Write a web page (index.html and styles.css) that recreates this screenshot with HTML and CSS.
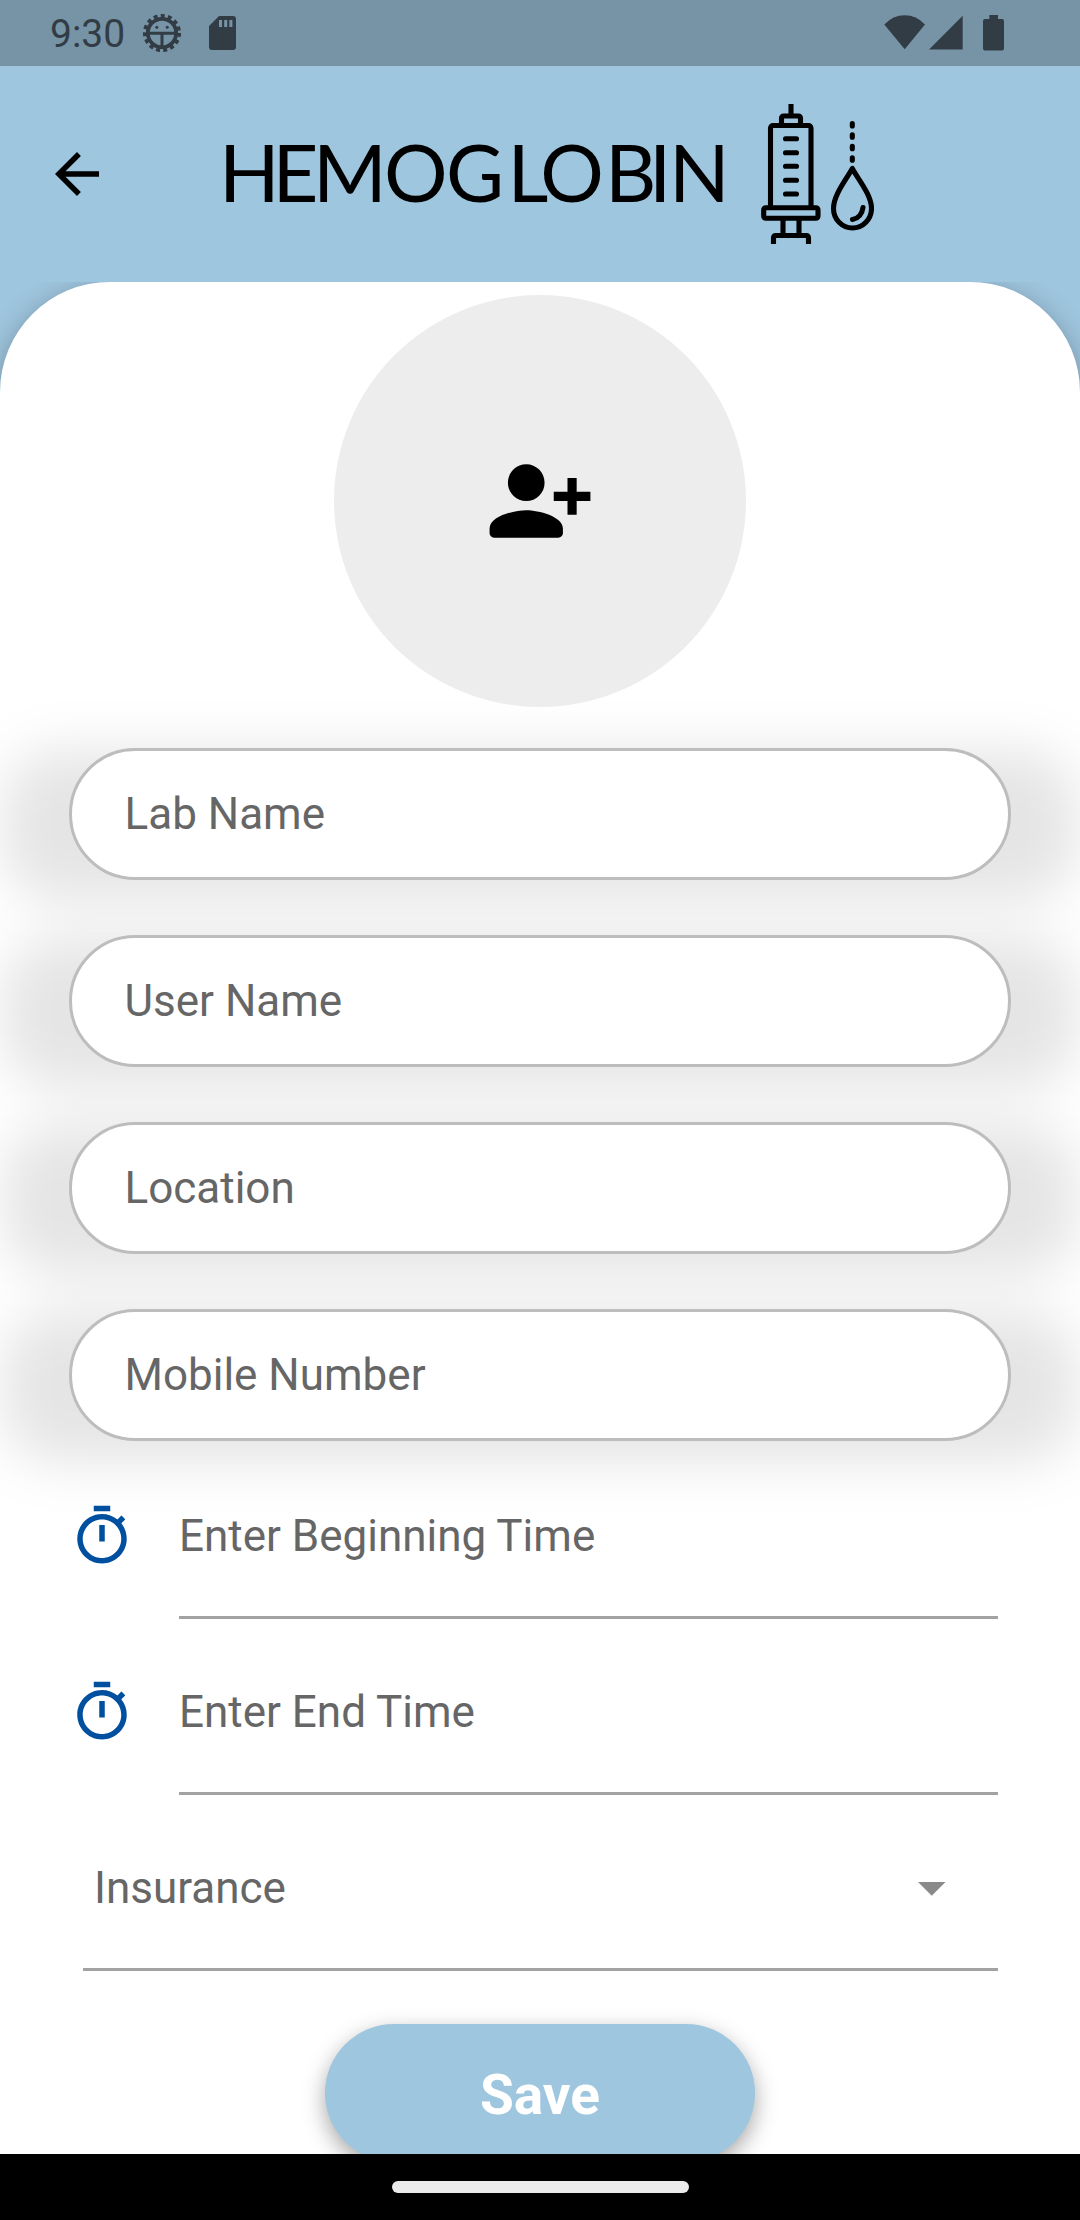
FILE: index.html
```html
<!DOCTYPE html>
<html lang="en">
<head>
<meta charset="utf-8">
<title>Hemoglobin</title>
<link rel="stylesheet" href="styles.css">
</head>
<body>
<div class="screen">
  <div class="status">
    <span class="clock">9:30</span>
    <svg class="bug" viewBox="0 0 40 40">
      <circle class="teeth" cx="20" cy="20" r="16.8"/>
      <circle class="ring" cx="20" cy="20" r="14.2"/>
      <path class="bar" d="M6 20.3h28M20 20v15"/>
      <circle cx="14.8" cy="14.3" r="1.5"/><circle cx="25.2" cy="14.3" r="1.5"/>
    </svg>
    <svg class="sd" viewBox="0 0 27 34"><path fill-rule="evenodd" d="M10 0h14a3 3 0 0 1 3 3v28a3 3 0 0 1-3 3H3a3 3 0 0 1-3-3V10zM10 4v7h3V4zM15.200 4v7h3V4zM20.400 4v7h3V4z"/></svg>
    <svg class="signals" viewBox="0 0 122 36">
      <path d="M0.300 9.500Q9 .300 20.700.300T41 9.500L20.700 34.300z"/>
      <path d="M45 34.600 78.700.800v33.800z"/>
      <path d="M105.300 0h8.700v4h4a2 2 0 0 1 2 2v27.500a2 2 0 0 1-2 2h-17a2 2 0 0 1-2-2V6a2 2 0 0 1 2-2h4.300z"/>
    </svg>
  </div>
  <header class="header">
    <svg class="back" viewBox="0 0 24 24"><path d="M20 11H7.830l5.590-5.590L12 4l-8 8 8 8 1.410-1.410L7.830 13H20v-2z"/></svg>
    <svg class="logo" viewBox="204 104 670 140">
      <text class="brand" y="202" x="219 272.500 313 384 446 507.500 540.300 605 649 669">HEMOGLOBIN</text>
      <g class="lines">
        <path d="M791 104v12"/>
        <path d="M781.500 124v-6a2 2 0 0 1 2-2h15a2 2 0 0 1 2 2v6"/>
        <path d="M770.500 206v-78a2.500 2.500 0 0 1 2.500-2.500h35.500a2.500 2.500 0 0 1 2.500 2.500v78"/>
        <rect x="763.700" y="207.700" width="54.300" height="10.500" rx="2"/>
        <path d="M783 219v14M799 219v14"/>
        <path d="M773.500 244v-6.500a2 2 0 0 1 2-2h31a2 2 0 0 1 2 2v6.500"/>
        <path class="dash" d="M785.500 138.700h11M785.500 152.700h11M785.500 166.300h11M785.500 180.300h11M785.500 194h11"/>
        <path class="dash" d="M852.300 123.500v2.500M852.300 134.800v2.500M852.300 146.300v2.500M852.300 157.800v2.500"/>
        <path d="M852.300 168.500C846 180 833.500 195 833.500 208.500a19 19.500 0 0 0 38 0C871.500 195 858.500 180 852.300 168.500z"/>
        <path class="dash" d="M863 207.500q-1.500 10.500-10.500 12"/>
      </g>
    </svg>
  </header>
  <main class="viewport">
    <div class="sheet">
      <div class="avatar">
        <svg viewBox="0 0 24 24"><path d="M13 8c0-2.210-1.790-4-4-4S5 5.790 5 8s1.790 4 4 4 4-1.790 4-4zm2 2v2h3v3h2v-3h3v-2h-3V7h-2v3h-3zM1 18v1c0 .550.450 1 1 1h14c.550 0 1-.450 1-1v-1c0-2.660-5.330-4-8-4s-8 1.340-8 4z"/></svg>
      </div>
      <form class="form">
        <div class="field"><div class="pill">Lab Name</div></div>
        <div class="field"><div class="pill">User Name</div></div>
        <div class="field"><div class="pill">Location</div></div>
        <div class="field"><div class="pill">Mobile Number</div></div>
      </form>
      <div class="time">
        <svg viewBox="0 0 24 24"><path d="M15 1H9v2h6V1zm-4 13h2V8h-2v6zm8.030-6.610 1.420-1.420c-.430-.510-.900-.990-1.410-1.410l-1.420 1.420C16.070 4.740 14.120 4 12 4c-4.970 0-9 4.030-9 9s4.020 9 9 9 9-4.030 9-9c0-2.120-.740-4.070-1.970-5.610zM12 20c-3.870 0-7-3.130-7-7s3.130-7 7-7 7 3.130 7 7-3.130 7-7 7z"/></svg>
        <div class="line">Enter Beginning Time</div>
      </div>
      <div class="time">
        <svg viewBox="0 0 24 24"><path d="M15 1H9v2h6V1zm-4 13h2V8h-2v6zm8.030-6.610 1.420-1.420c-.430-.510-.900-.990-1.410-1.410l-1.420 1.420C16.070 4.740 14.120 4 12 4c-4.970 0-9 4.030-9 9s4.020 9 9 9 9-4.030 9-9c0-2.120-.740-4.070-1.970-5.610zM12 20c-3.870 0-7-3.130-7-7s3.130-7 7-7 7 3.130 7 7-3.130 7-7 7z"/></svg>
        <div class="line">Enter End Time</div>
      </div>
      <div class="select"><span>Insurance</span><svg viewBox="0 0 27.500 13.750"><path d="M0 0h27.500L13.750 13.750z"/></svg></div>
      <div class="save">Save</div>
    </div>
  </main>
  <div class="nav"><div class="handle"></div></div>
</div>
</body>
</html>
```

FILE: styles.css
```css
* { box-sizing: border-box; }
body { margin: 0; font-family: Roboto, sans-serif; }
svg { display: block; flex: none; }
.screen { width: 1080px; height: 2220px; display: flex; flex-direction: column; background: #9fc6df; overflow: hidden; }

.status { height: 66px; flex: none; display: flex; align-items: flex-start; background: #7794a7; color: #323c45; fill: #323c45; padding-left: 50px; }
.clock { font-size: 39px; line-height: 66px; width: 92px; padding-top: 1px; }
.bug { width: 40px; height: 40px; margin-top: 13px; }
.teeth { fill: none; stroke: #323c45; stroke-width: 4.5; stroke-dasharray: 3.9 3.137; }
.ring { fill: none; stroke: #323c45; stroke-width: 3.8; }
.bar { fill: none; stroke: #323c45; stroke-width: 3; }
.sd { width: 27px; height: 34px; margin: 16px 0 0 27px; }
.signals { width: 122px; height: 36px; margin: 15px 74px 0 auto; }

.header { height: 215.5px; flex: none; display: flex; align-items: center; padding-left: 44px; }
.back { width: 66px; height: 66px; }
.logo { width: 670px; height: 140px; margin-left: 94px; }
.brand { font-family: Lato, sans-serif; font-size: 79.5px; }
.lines { fill: none; stroke: #000; stroke-width: 5.1; stroke-linejoin: round; }
.dash { stroke-linecap: round; }

.viewport { flex: 1; min-height: 0; overflow: hidden; }
.sheet { height: 2000px; background: #fff; border-radius: 110px 110px 0 0; box-shadow: 0 7px 28px rgba(0, 0, 0, .3); display: flex; flex-direction: column; isolation: isolate; }
.avatar { width: 412.5px; height: 412.5px; margin: 13px auto 0; border-radius: 50%; background: #ededed; display: flex; align-items: center; justify-content: center; }
.avatar svg { width: 110px; height: 110px; }

.form { display: flex; flex-direction: column; gap: 55px; margin-top: 41px; }
.field { position: relative; padding: 0 69px; }
.field::before { content: ""; position: absolute; z-index: -1; inset: 2px 2px -22px; border-radius: 56px; background: rgba(0, 0, 0, .1); filter: blur(26px); }
.pill { height: 132px; border: 3px solid #bdbdbd; border-radius: 66px; background: #fff; padding-left: 52.5px; line-height: 126px; font-size: 44px; color: #666; }

.time { display: flex; padding: 0 82.5px 0 69px; height: 154px; margin-top: 22px; fill: #01509f; }
.form + .time { margin-top: 23.5px; }
.time svg { width: 66px; height: 66px; margin-top: 38.5px; }
.line { flex: 1; margin-left: 44px; border-bottom: 3px solid #a2a2a2; font-size: 44px; line-height: 143px; color: #666; }
.select { display: flex; align-items: center; justify-content: space-between; margin: 22px 82.5px 0; height: 154px; border-bottom: 3px solid #a2a2a2; padding: 0 52px 9px 11.5px; font-size: 44px; color: #666; fill: #8a8a8a; }
.select svg { width: 27.5px; height: 13.75px; margin-top: 3px; }
.save { flex: none; width: 430px; height: 137.5px; margin: 53.5px auto 0; border-radius: 69px; background: #9fc6df; box-shadow: 0 8px 22px rgba(0, 0, 0, .35); color: #fff; font-size: 55px; font-weight: 700; line-height: 142px; text-align: center; }

.nav { height: 66px; flex: none; background: #000; display: flex; align-items: center; justify-content: center; }
.handle { width: 297px; height: 11.5px; border-radius: 6px; background: #ebebeb; }
```
